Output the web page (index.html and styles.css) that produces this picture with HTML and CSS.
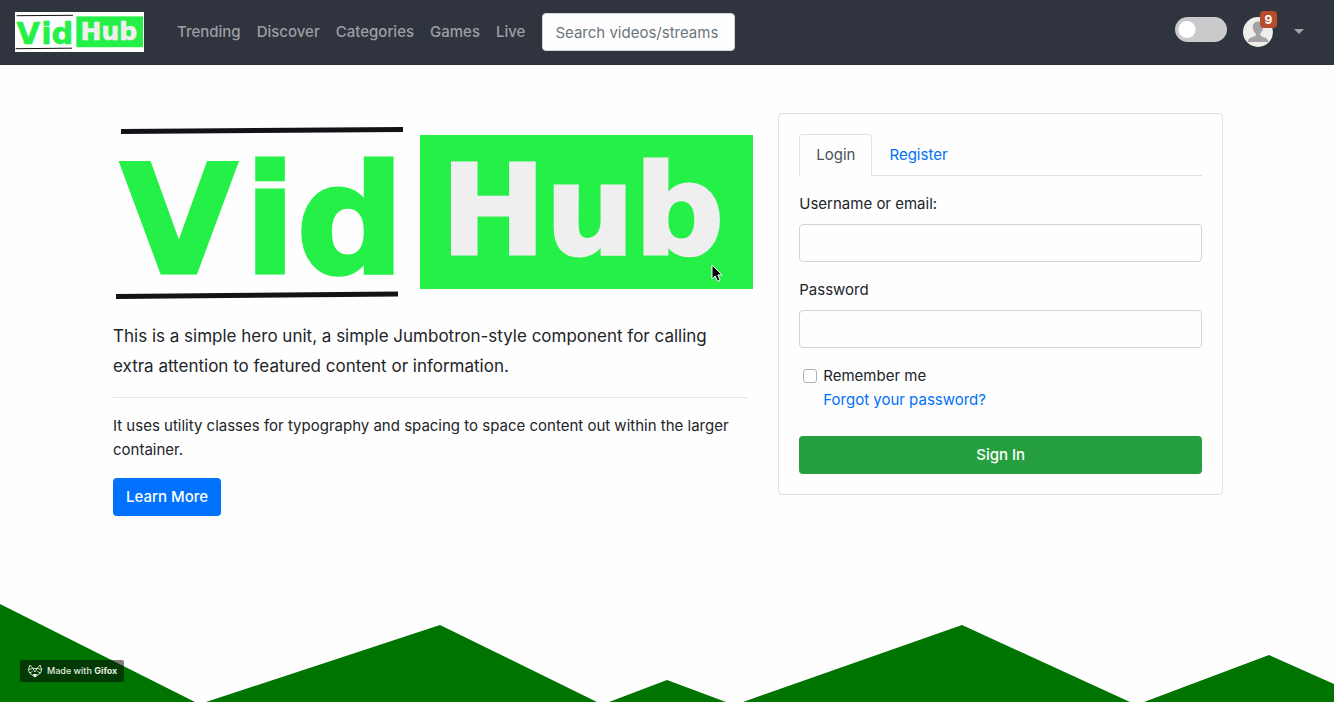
FILE: index.html
```html
<!DOCTYPE html>
<html lang="en">
<head>
<meta charset="utf-8">
<meta name="viewport" content="width=device-width, initial-scale=1">
<title>VidHub</title>
<link rel="stylesheet" href="styles.css">
</head>
<body>
<header class="navbar">
  <a class="brand" href="#" aria-label="VidHub home">
    <svg class="logo" width="129" height="40" viewBox="0 0 645 200">
      <rect width="645" height="200" fill="#fefefe"/>
      <path class="logo-rule" d="M8 18.500L290 16.500M3 183.500L285 181"/>
      <text class="logo-vid" x="7" y="160">V<tspan x="131">id</tspan></text>
      <rect x="307" y="22" width="333" height="154" fill="#24f048"/>
      <text class="logo-hub" x="328" y="141">Hub</text>
    </svg>
  </a>
  <nav class="nav-links">
    <a href="#">Trending</a>
    <a href="#">Discover</a>
    <a href="#">Categories</a>
    <a href="#">Games</a>
    <a href="#">Live</a>
  </nav>
  <input class="field search" type="text" placeholder="Search videos/streams" aria-label="Search videos/streams">
  <div class="nav-tools">
    <input class="switch" type="checkbox" role="switch" aria-label="Dark mode">
    <button class="account" type="button" aria-label="Account menu">
      <span class="avatar">
        <svg width="30" height="30" viewBox="0 0 30 30">
          <circle cx="15" cy="15" r="15" fill="#eeefea"/>
          <path d="M15 4.500c-3.600 0-5.300 2.500-5.200 5.700.1 3 1.400 4.800 2.900 6.300.5 1.600-.2 2.600-2.300 3.300-3.400 1-5.400 1.900-5.700 5.200h20.600c-.3-3.300-2.300-4.200-5.700-5.200-2.100-.7-2.800-1.700-2.300-3.300 1.500-1.500 2.800-3.300 2.900-6.300.1-3.200-1.600-5.700-5.200-5.700z" fill="#a5a2a7"/>
        </svg>
        <span class="badge">9</span>
      </span>
      <svg width="10" height="5" viewBox="0 0 10 5"><path d="M0 0h10L5 5z" fill="#a3a3a6"/></svg>
    </button>
  </div>
</header>

<main class="content">
  <section class="hero">
    <div class="hero-logo">
      <svg class="logo" width="645" height="200" viewBox="0 0 645 200" role="img" aria-label="VidHub">
        <path class="logo-rule" d="M8 18.500L290 16.500M3 183.500L285 181"/>
        <text class="logo-vid" x="7" y="160">V<tspan x="131">id</tspan></text>
        <rect x="307" y="22" width="333" height="154" fill="#24f048"/>
        <text class="logo-hub" x="328" y="141">Hub</text>
      </svg>
      <svg class="pointer" width="12" height="20" viewBox="0 0 12 20" aria-hidden="true"><path d="M1 1v14l3.200-3 2.400 5.300 2.500-1.100-2.300-5.200h4.300z" fill="#000" stroke="#fff"/></svg>
    </div>
    <p class="lead">This is a simple hero unit, a simple Jumbotron-style component for calling extra attention to featured content or information.</p>
    <hr>
    <p class="detail">It uses utility classes for typography and spacing to space content out within the larger container.</p>
    <a class="btn btn-primary" href="#">Learn More</a>
  </section>

  <section class="card">
    <nav class="tabs">
      <a class="tab active" href="#">Login</a>
      <a class="tab" href="#">Register</a>
    </nav>
    <form>
      <div class="group">
        <label for="user">Username or email:</label>
        <input class="field" id="user" type="text">
      </div>
      <div class="group">
        <label for="pass">Password</label>
        <input class="field" id="pass" type="password">
      </div>
      <div class="remember">
        <input id="remember" type="checkbox">
        <label for="remember">Remember me</label>
        <a href="#">Forgot your password?</a>
      </div>
      <button class="btn btn-success" type="submit">Sign In</button>
    </form>
  </section>
</main>

<footer class="hills">
  <svg class="range" viewBox="0 0 1334 98" preserveAspectRatio="none" aria-hidden="true">
    <path fill="#007400" d="M0 0L195 98H0zM206 98L440 21L597 98zM609 98L667 76L726 98zM743 98L962 21L1130 98zM1144 98L1269 51L1334 80V98z"/>
  </svg>
  <div class="credit">
    <svg width="16" height="14" viewBox="0 0 15 14" fill="none" stroke="#cfe0cf" stroke-linejoin="round">
      <path d="M2.500 1L.8 5.500 2 9l5.500 4L13 9l1.200-3.500L12.500 1 9.500 4.500h-4zM.8 5.500l4.700-1L7.500 8l2-3.500 4.700 1M2 9l3-1.500M13 9l-3-1.500"/>
      <path d="M6 10.500h3L7.500 13z" fill="#fff" stroke="#fff"/>
    </svg>
    <span>Made with <b>Gifox</b></span>
  </div>
</footer>
</body>
</html>
```
FILE: styles.css
```css
* { box-sizing: border-box; }

body {
  margin: 0;
  min-height: 100vh;
  display: flex;
  flex-direction: column;
  background: #fefefe;
  color: #212529;
  font: 15px/24px Inter, "Liberation Sans", sans-serif;
}

a { color: #0070f8; text-decoration: none; }
svg { display: block; }
p { margin: 0; }

.logo {
  font-family: "DejaVu Sans", sans-serif;
  font-weight: 700;
  font-kerning: none;
}

.logo-rule { stroke: #141217; stroke-width: 5px; }

.logo-vid {
  fill: #24f048;
  stroke: #24f048;
  stroke-width: 3px;
  font-size: 152px;
}

.logo-hub {
  fill: #efefef;
  stroke: #efefef;
  stroke-width: 3px;
  font-size: 125px;
}

.navbar {
  display: flex;
  align-items: center;
  height: 65px;
  padding: 0 30px 1px 15px;
  background: #30343f;
}

.nav-links {
  display: flex;
  gap: 16px;
  margin: 0 17px 0 33px;
}

.nav-links a { color: #9d9ea3; font-weight: 500; }

.field {
  width: 100%;
  height: 38px;
  padding: 6px 12px;
  border: 1px solid #ced4da;
  border-radius: 4px;
  background: #fefefe;
  color: #495057;
  font: inherit;
}

.search { width: 193px; padding-right: 6px; }
.field::placeholder { color: #6c757d; opacity: 1; }

.nav-tools {
  display: flex;
  align-items: center;
  gap: 16px;
  margin-left: auto;
  padding-bottom: 6px;
}

.switch {
  appearance: none;
  width: 52px;
  height: 25px;
  margin: 0;
  border-radius: 13px;
  background: radial-gradient(circle at 12px 50%, #fff 8px, #cac9cb 9px);
}

.account {
  display: flex;
  align-items: center;
  gap: 21px;
  padding: 5px 0 0;
  border: 0;
  background: none;
  font: inherit;
}

.avatar { position: relative; }

.badge {
  position: absolute;
  top: -6px;
  right: -4px;
  width: 17px;
  border-radius: 4px;
  background: #b64c2b;
  color: #fff;
  font-size: 12px;
  font-weight: 700;
  line-height: 17px;
  text-align: center;
}

.content {
  display: grid;
  grid-template-columns: minmax(0, 10fr) minmax(0, 7fr);
  align-items: start;
  gap: 30px;
  width: 100%;
  max-width: 1140px;
  margin: 0 auto;
  padding: 48px 14px 48px 16px;
}

.hero-logo { position: relative; margin-bottom: 8px; }
.pointer { position: absolute; left: 598px; top: 151px; }

.lead {
  font-size: 17px;
  line-height: 30px;
}

hr {
  margin: 16px 0;
  border: 0;
  border-top: 1px solid #e3e4e5;
}

.detail { margin-bottom: 16px; }

.btn {
  display: inline-block;
  padding: 7px 13px;
  border: 0;
  border-radius: 4px;
  color: #fff;
  font: inherit;
  font-weight: 500;
}

.btn-primary { background: #0072fd; }
.btn-success { width: 100%; background: #269f41; }

.card {
  padding: 20px;
  border: 1px solid #dfe0e1;
  border-radius: 4px;
}

.tabs {
  display: flex;
  margin-bottom: 16px;
  border-bottom: 1px solid #dee2e6;
}

.tab {
  margin-bottom: -1px;
  padding: 8px 16px;
  border: 1px solid transparent;
  border-radius: 4px 4px 0 0;
}

.tab.active {
  border-color: #dee2e6 #dee2e6 #fefefe;
  background: #fefefe;
  color: #495057;
}

.group { margin-bottom: 16px; }
.group label { display: block; margin-bottom: 8px; }

.remember {
  display: grid;
  grid-template-columns: 14px 1fr;
  align-items: center;
  column-gap: 6px;
  margin-bottom: 24px;
  padding-left: 4px;
}

.remember input {
  appearance: none;
  width: 14px;
  height: 14px;
  margin: 0;
  border: 1px solid #b0b3b0;
  border-radius: 3px;
}

.remember a { grid-column: 2; }

.hills { position: relative; margin-top: auto; }
.range { width: 100%; height: 98px; }

.credit {
  position: absolute;
  left: 20px;
  bottom: 20px;
  display: flex;
  align-items: center;
  gap: 4px;
  height: 22px;
  padding: 0 7px;
  border-radius: 2px;
  background: rgba(5, 0, 5, 0.5);
  color: #e2ece2;
  font-size: 9px;
  font-weight: 500;
  white-space: nowrap;
}
```
